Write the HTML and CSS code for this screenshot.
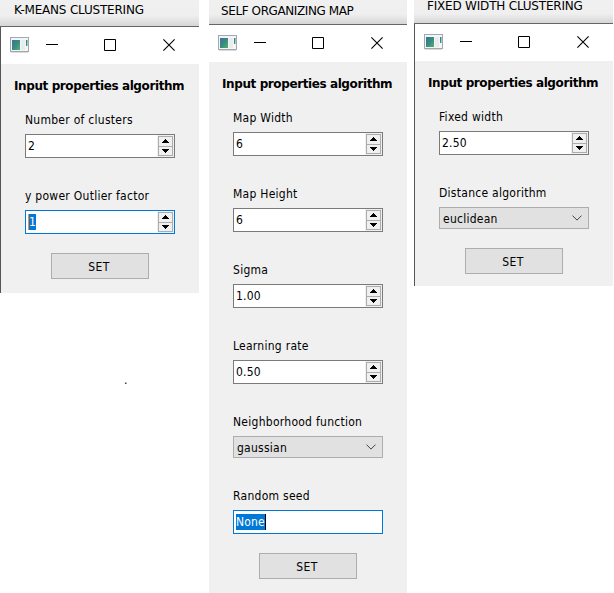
FILE: index.html
```
<!DOCTYPE html>
<html lang="en">
<head>
<meta charset="utf-8">
<title>Input properties algorithm</title>
<link rel="stylesheet" href="styles.css">
</head>
<body>
<svg width="0" height="0" class="defs">
  <defs>
    <linearGradient id="sea" x1="0" y1="0" x2="1" y2="1"><stop offset="0" stop-color="#3f709c"/><stop offset=".5" stop-color="#378b82"/><stop offset="1" stop-color="#58ae70"/></linearGradient>
    <symbol id="app" viewBox="0 0 19 16">
      <rect x=".5" y=".5" width="18" height="14" fill="#f4f5f6" stroke="#a2a8b0"/>
      <path d="M1 15.5h17" stroke="#d9d9d9"/>
      <rect x="2" y="3" width="8" height="10" fill="url(#sea)"/>
      <rect x="11" y="3" width="4" height="10" fill="#e8ecee"/>
      <rect x="16" y="3" width="1.5" height="6" fill="url(#sea)"/>
    </symbol>
    <symbol id="min" viewBox="0 0 12 13"><path d="M0 6.5h12" stroke="#000"/></symbol>
    <symbol id="max" viewBox="0 0 12 12"><path d="M.5 .5h11v11H.5z" fill="none" stroke="#000"/></symbol>
    <symbol id="close" viewBox="0 0 12 12"><path d="M.4 .4l11.2 11.2M11.6 .4L.4 11.6" stroke="#000" stroke-width="1.1"/></symbol>
    <symbol id="up" viewBox="0 0 7 4"><path d="M3 0h1v1h1v1h1v1h1v1H0V3h1V2h1V1h1z"/></symbol>
    <symbol id="down" viewBox="0 0 7 4"><path d="M0 0h7v1H6v1H5v1H4v1H3V3H2V2H1V1H0z"/></symbol>
    <symbol id="chev" viewBox="0 0 10 6"><path d="M.5 .6L5 5.1 9.5 .6" fill="none" stroke="#444"/></symbol>
  </defs>
</svg>
<main class="board">
  <div class="column">
    <section class="panel kmeans">
      <header class="caption"><span>K-MEANS CLUSTERING</span></header>
      <div class="window edged">
        <div class="titlebar"><svg class="app"><use href="#app"/></svg><svg class="min"><use href="#min"/></svg><svg class="max"><use href="#max"/></svg><svg class="close"><use href="#close"/></svg></div>
        <div class="content">
          <h1><span>Input properties algorithm</span></h1>
          <div class="fields">
            <div class="field"><label><span>Number of clusters</span></label><div class="spin"><span class="value">2</span><div class="steps"><i><svg><use href="#up"/></svg></i><i><svg><use href="#down"/></svg></i></div></div></div>
            <div class="field"><label><span>y power Outlier factor</span></label><div class="spin focus"><span class="value selected caret-start">1</span><div class="steps"><i><svg><use href="#up"/></svg></i><i><svg><use href="#down"/></svg></i></div></div></div>
          </div>
          <button>SET</button>
        </div>
      </div>
    </section>
    <p class="dot">.</p>
  </div>
  <section class="panel som">
    <header class="caption"><span>SELF ORGANIZING MAP</span></header>
    <div class="window">
      <div class="titlebar"><svg class="app"><use href="#app"/></svg><svg class="min"><use href="#min"/></svg><svg class="max"><use href="#max"/></svg><svg class="close"><use href="#close"/></svg></div>
      <div class="content">
        <h1><span>Input properties algorithm</span></h1>
        <div class="fields">
          <div class="field"><label><span>Map Width</span></label><div class="spin"><span class="value">6</span><div class="steps"><i><svg><use href="#up"/></svg></i><i><svg><use href="#down"/></svg></i></div></div></div>
          <div class="field"><label><span>Map Height</span></label><div class="spin"><span class="value">6</span><div class="steps"><i><svg><use href="#up"/></svg></i><i><svg><use href="#down"/></svg></i></div></div></div>
          <div class="field"><label><span>Sigma</span></label><div class="spin"><span class="value">1.00</span><div class="steps"><i><svg><use href="#up"/></svg></i><i><svg><use href="#down"/></svg></i></div></div></div>
          <div class="field"><label><span>Learning rate</span></label><div class="spin"><span class="value">0.50</span><div class="steps"><i><svg><use href="#up"/></svg></i><i><svg><use href="#down"/></svg></i></div></div></div>
          <div class="field"><label><span>Neighborhood function</span></label><div class="combo"><span>gaussian</span><svg><use href="#chev"/></svg></div></div>
          <div class="field"><label><span>Random seed</span></label><div class="spin focus"><span class="value selected caret-end">None</span></div></div>
        </div>
        <button>SET</button>
      </div>
    </div>
  </section>
  <section class="panel fixed">
    <header class="caption"><span>FIXED WIDTH CLUSTERING</span></header>
    <div class="window edged">
      <div class="titlebar"><svg class="app"><use href="#app"/></svg><svg class="min"><use href="#min"/></svg><svg class="max"><use href="#max"/></svg><svg class="close"><use href="#close"/></svg></div>
      <div class="content">
        <h1><span>Input properties algorithm</span></h1>
        <div class="fields">
          <div class="field"><label><span>Fixed width</span></label><div class="spin"><span class="value">2.50</span><div class="steps"><i><svg><use href="#up"/></svg></i><i><svg><use href="#down"/></svg></i></div></div></div>
          <div class="field"><label><span>Distance algorithm</span></label><div class="combo"><span>euclidean</span><svg><use href="#chev"/></svg></div></div>
        </div>
        <button>SET</button>
      </div>
    </div>
  </section>
</main>
</body>
</html>
```
FILE: styles.css
```
* { box-sizing: border-box; }
body { margin: 0; background: #fff; color: #000; font: 12px/20px "DejaVu Sans Condensed", "DejaVu Sans", sans-serif; font-stretch: condensed; overflow: hidden; }
.defs { position: absolute; }
svg { display: block; flex: none; }
.board { display: flex; align-items: flex-start; height: 593px; }
.column { width: 199px; margin-right: 10px; }
.panel { width: 199px; flex: none; display: flex; flex-direction: column; }
.som { width: 198px; margin-right: 7px; height: 593px; }
.kmeans { height: 293px; }
.fixed { height: 286px; }
.caption { height: 27px; flex: none; padding-left: 14px; white-space: nowrap; background: linear-gradient(#f0f0f0 0, #efefef 60%, #d6d6d6 100%); border-bottom: 1px solid #666; font-family: "DejaVu Sans", sans-serif; font-stretch: normal; letter-spacing: -.2px; }
.som .caption { height: 25px; padding-left: 12px; line-height: 22px; letter-spacing: -.4px; }
.fixed .caption { height: 24px; padding-left: 13px; line-height: 13px; }
.window { flex: 1; background: #f0f0f0; }
.edged { border-left: 1px solid #555; }
.titlebar { height: 37px; background: #fff; display: flex; padding: 10px 0 0 9px; }
.app { width: 19px; height: 16px; }
.min { width: 12px; height: 13px; margin: 1px 0 0 17px; }
.max { width: 12px; height: 12px; margin: 2px 0 0 46px; }
.close { width: 12px; height: 12px; margin: 2px 0 0 47px; }
.content { padding: 12px 0 0 24px; }
h1 { margin: 0 0 14px -11px; font: bold 12px/20px "DejaVu Sans", sans-serif; font-stretch: normal; white-space: nowrap; letter-spacing: -.4px; }
.fields { display: flex; flex-direction: column; gap: 26px; width: 150px; }
label { display: block; height: 20px; margin-bottom: 4px; white-space: nowrap; letter-spacing: .27px; }
.field + .field { padding-top: 2px; }
.spin { height: 24px; background: #fff; border: 1px solid #7a7a7a; display: flex; align-items: center; justify-content: space-between; padding: 0 1px 0 2px; }
.focus { border-color: #0078d7; }
.value { line-height: 17px; height: 16px; letter-spacing: .2px; }
.selected { background: #0078d7; color: #fff; }
.caret-start { border-left: 1px solid #ff8728; margin-left: 0; }
.caret-end { border-right: 1px solid #000; }
.steps { width: 15px; height: 20px; display: flex; flex-direction: column; border: 1px solid #acacac; background: #f0f0f0; box-shadow: 0 0 0 1px #f0f0f0; }
.steps i { flex: 1; display: flex; align-items: center; justify-content: center; }
.steps i + i { border-top: 1px solid #acacac; }
.steps svg { width: 7px; height: 4px; }
.combo { height: 22px; border: 1px solid #adadad; background: #e1e1e1; display: flex; align-items: center; justify-content: space-between; padding: 0 6px 0 3px; letter-spacing: .25px; }
.combo span { padding-top: 1px; }
.combo svg { width: 10px; height: 6px; }
button { display: block; width: 98px; height: 26px; margin: 19px 0 0 26px; padding: 2px 2px 0 0; border: 1px solid #adadad; background: #e1e1e1; color: #000; font: inherit; letter-spacing: .4px; }
.dot { margin: 77px 0 0 124px; }
```
